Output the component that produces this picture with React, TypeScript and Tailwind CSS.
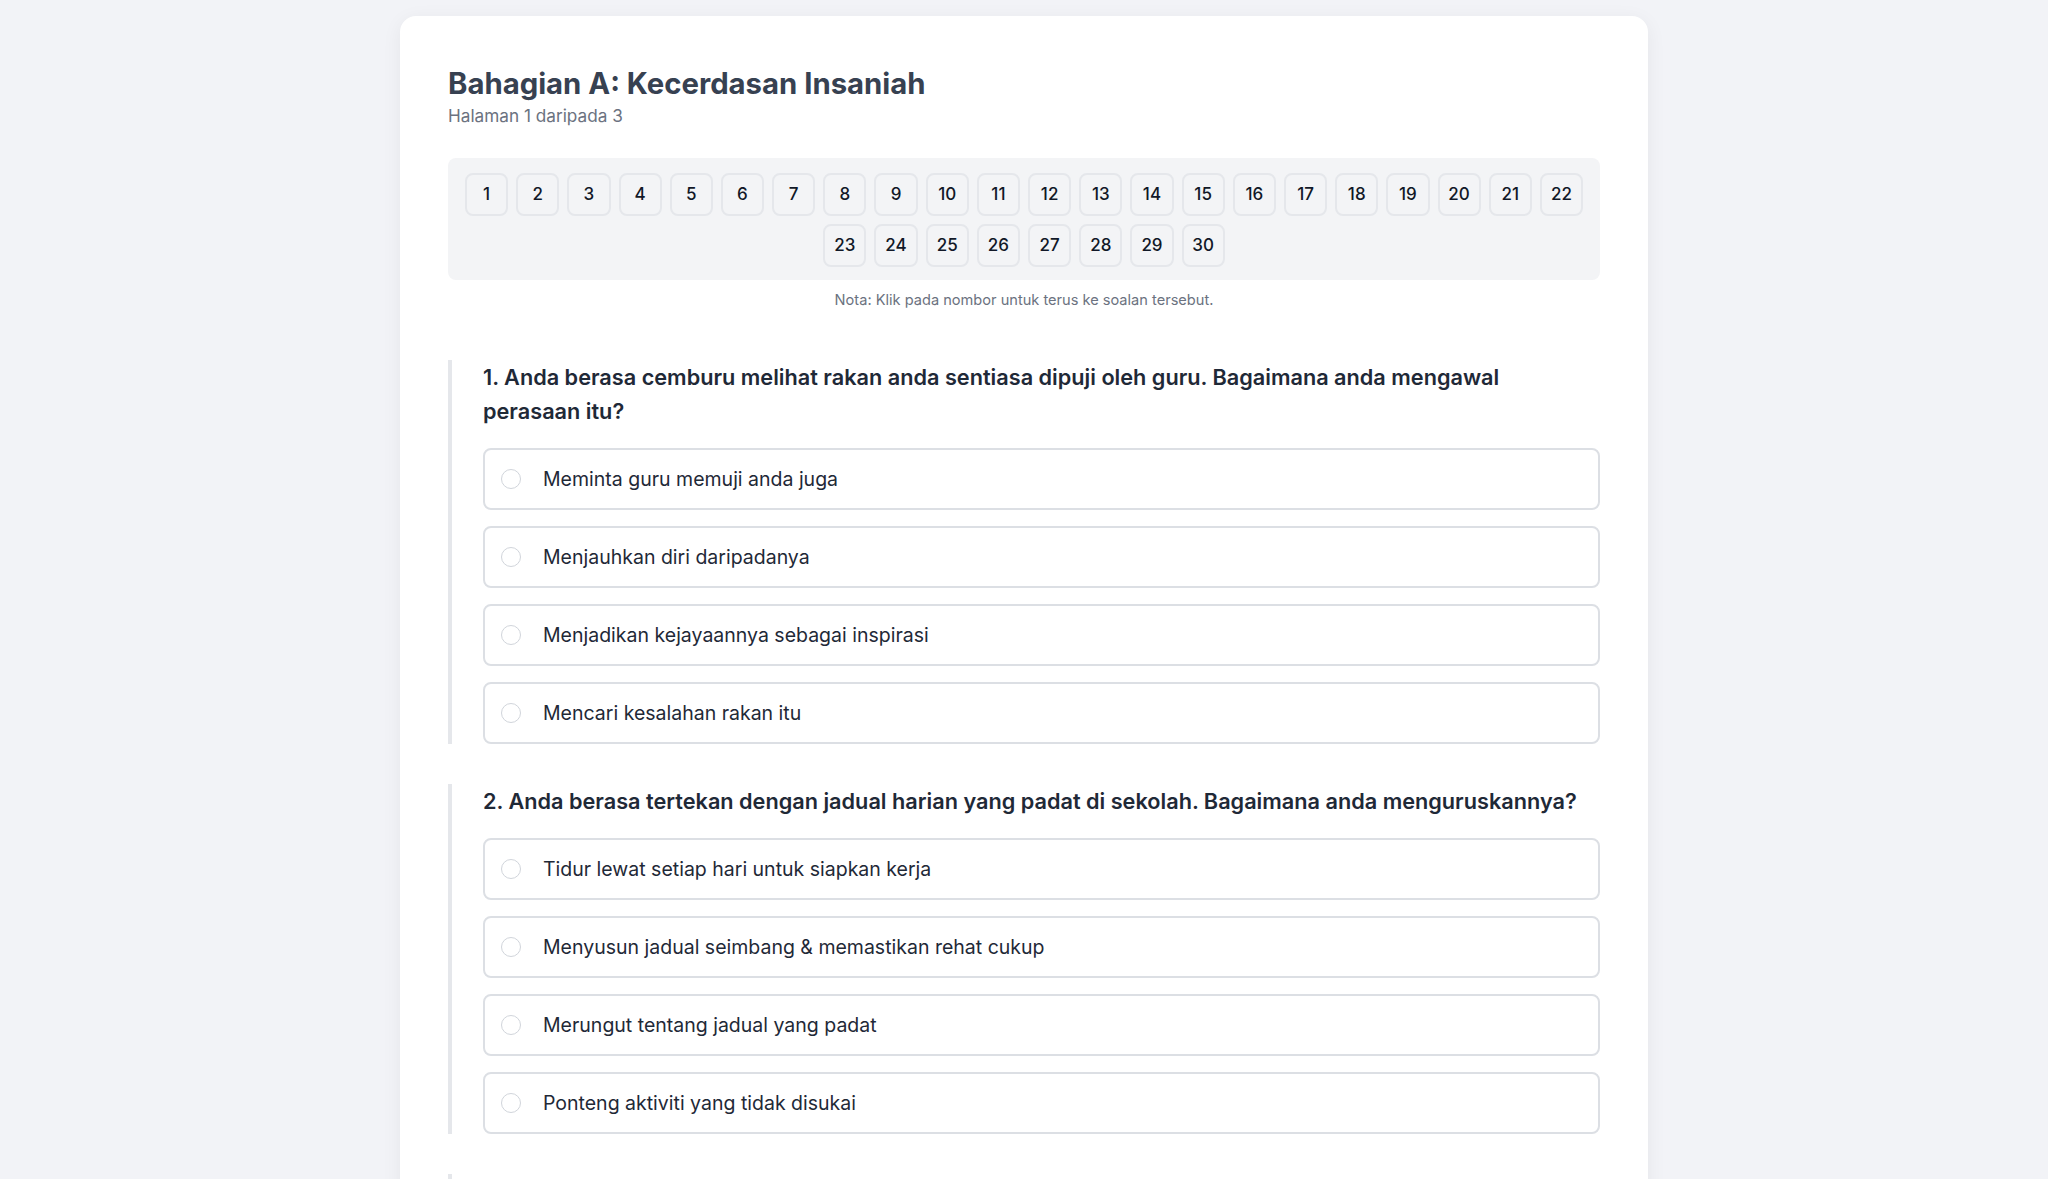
import React from "react";

const questions = [
  {
    n: 1,
    text: "Anda berasa cemburu melihat rakan anda sentiasa dipuji oleh guru. Bagaimana anda mengawal perasaan itu?",
    options: [
      "Meminta guru memuji anda juga",
      "Menjauhkan diri daripadanya",
      "Menjadikan kejayaannya sebagai inspirasi",
      "Mencari kesalahan rakan itu",
    ],
  },
  {
    n: 2,
    text: "Anda berasa tertekan dengan jadual harian yang padat di sekolah. Bagaimana anda menguruskannya?",
    options: [
      "Tidur lewat setiap hari untuk siapkan kerja",
      "Menyusun jadual seimbang & memastikan rehat cukup",
      "Merungut tentang jadual yang padat",
      "Ponteng aktiviti yang tidak disukai",
    ],
  },
  {
    n: 3,
    text: "Rakan anda meluahkan masalah keluarganya kepada anda. Apakah tindakan anda?",
    options: [
      "Mendengar dengan teliti dan memberi sokongan",
      "Menceritakan masalahnya kepada rakan lain",
      "Mengabaikan luahannya",
      "Menukar topik perbualan",
    ],
  },
];

export default function App() {
  const nums = Array.from({ length: 30 }, (_, i) => i + 1);
  return (
    <div
      className="min-h-screen bg-[#f2f3f7] pt-4"
      style={{ fontFamily: "Inter, 'Noto Sans', sans-serif" }}
    >
      <div className="mx-auto w-[1248px] rounded-2xl bg-white p-12 shadow-[0_4px_20px_rgba(0,0,0,0.06)]">
        <h1 className="text-[29.3px] font-bold leading-10 text-[#374151]">
          Bahagian A: Kecerdasan Insaniah
        </h1>
        <p className="text-[17.2px] leading-6 text-[#6b7280]">Halaman 1 daripada 3</p>

        <div className="mt-[30px] flex flex-wrap justify-center gap-2 rounded-lg bg-[#f3f4f6] px-4 pb-[13px] pt-[15px]">
          {nums.map((n) => (
            <button
              key={n}
              className="flex h-[43px] w-[43.2px] items-center justify-center rounded-lg border-2 border-[#e5e7eb] bg-[#f3f4f6] text-[17px] font-medium text-[#111827]"
            >
              {n}
            </button>
          ))}
        </div>
        <p className="mt-[10px] text-center text-[14.6px] leading-5 text-[#6b7280]">
          Nota: Klik pada nombor untuk terus ke soalan tersebut.
        </p>

        <div className="mt-[50px] flex flex-col gap-10">
          {questions.map((q) => (
            <div key={q.n} className="border-l-4 border-[#e5e7eb] pl-[31px]">
              <p className="text-[21.7px] font-semibold leading-[34px] text-[#1f2937]">
                {`${q.n}. ${q.text}`}
              </p>
              <div className="mt-5 flex flex-col gap-4">
                {q.options.map((o) => (
                  <label
                    key={o}
                    className="flex h-[62px] items-center rounded-lg border-2 border-[#dcdfe4] bg-white px-4"
                  >
                    <span className="h-5 w-5 shrink-0 rounded-full border border-[#d1d5db] bg-white" />
                    <span className="ml-[22px] text-[19.5px] leading-7 text-[#1f2937]">{o}</span>
                  </label>
                ))}
              </div>
            </div>
          ))}
        </div>
      </div>
    </div>
  );
}
